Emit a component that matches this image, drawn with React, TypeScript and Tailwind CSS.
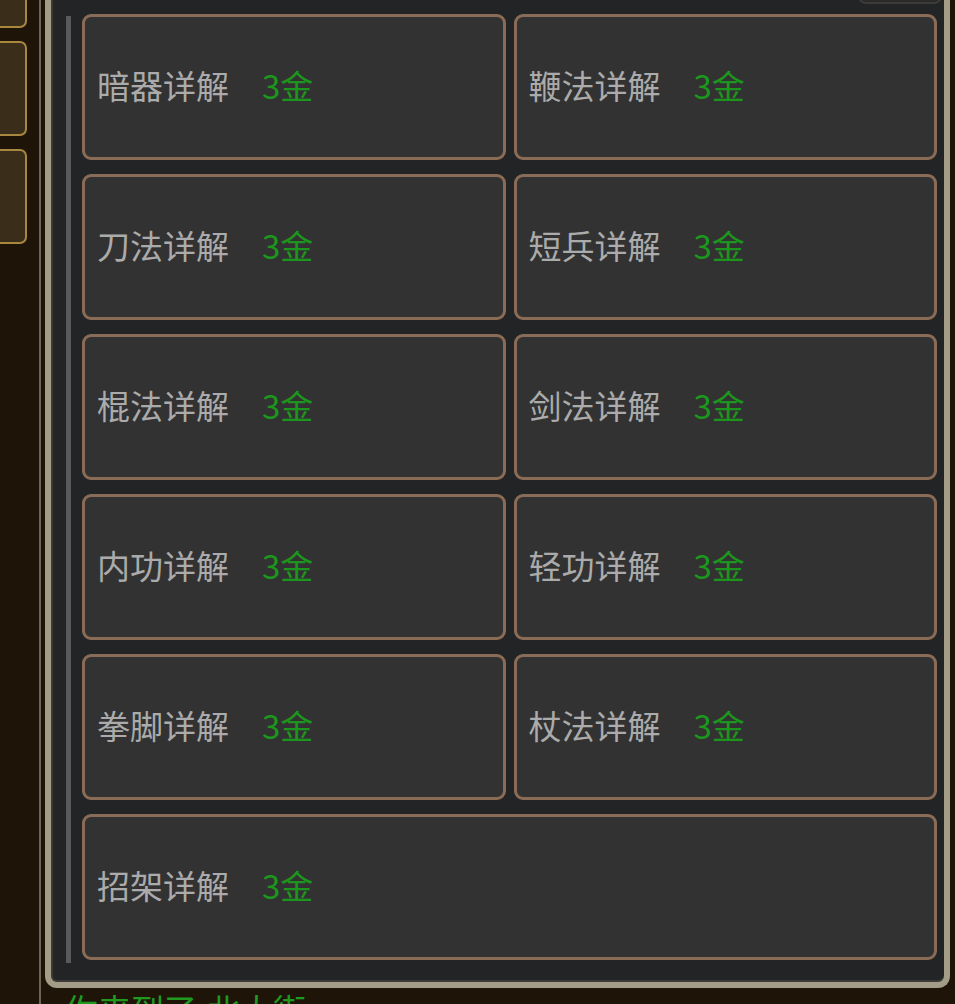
const skills = [
  '暗器详解',
  '鞭法详解',
  '刀法详解',
  '短兵详解',
  '棍法详解',
  '剑法详解',
  '内功详解',
  '轻功详解',
  '拳脚详解',
  '杖法详解',
  '招架详解',
];

const font = { fontFamily: '"Noto Sans CJK SC", "Noto Sans", sans-serif' };

function SkillCard({ name, wide }: { name: string; wide?: boolean }) {
  return (
    <div
      className={`h-[146px] rounded-[9px] border-[3px] border-[#8a6c56] bg-[#323232] flex items-center pl-[12px] pb-[3px] ${
        wide ? 'col-span-2' : ''
      }`}
    >
      <span className="text-[33px] leading-none text-[#ababab]">{name}</span>
      <span className="ml-[33px] text-[33px] leading-none text-[#1c961c]">3金</span>
    </div>
  );
}

export default function App() {
  return (
    <div className="w-[955px] h-[1004px] overflow-hidden bg-[#1e1408] flex" style={font}>
      {/* side buttons */}
      <div className="w-[27px] shrink-0 flex flex-col gap-[13px] mt-[-67px]">
        <div className="h-[95px] rounded-r-[7px] border-[2.5px] border-l-0 border-[#a8873f] bg-[#3a2e1b]" />
        <div className="h-[95px] rounded-r-[7px] border-[2.5px] border-l-0 border-[#a8873f] bg-[#3a2e1b]" />
        <div className="h-[95px] rounded-r-[7px] border-[2.5px] border-l-0 border-[#a8873f] bg-[#3a2e1b]" />
      </div>

      <div className="w-[12px] shrink-0" />
      <div className="w-[2px] shrink-0 bg-[#6d6658]" />
      <div className="w-[4px] shrink-0" />

      {/* main column */}
      <div className="w-[905px] shrink-0 flex flex-col">
        <div className="h-[988px] shrink-0 border-x-[6px] border-b-[6px] border-[#a39d88] rounded-b-[12px] bg-[#232426] flex flex-col overflow-hidden shadow-[inset_0_-2px_0_#3b3a36,inset_2px_0_0_#3b3a36]">
          <div className="h-[4px] flex justify-end pr-[2px]">
            <div className="w-[84px] h-[44px] mt-[-40px] rounded-[8px] border-[2px] border-[#3d3b39] bg-[#2a2a2a]" />
          </div>
          <div className="flex items-start pl-[15px] pr-[7px] pt-[10px]">
            <div className="w-[5px] h-[947px] mt-[2px] bg-[#5a5a5a] shrink-0" />
            <div className="ml-[11px] flex-1 grid grid-cols-2 content-start gap-x-[8px] gap-y-[14px]">
              {skills.map((s, i) => (
                <SkillCard key={s} name={s} wide={i === skills.length - 1} />
              ))}
            </div>
          </div>
        </div>
        <div className="pl-[20px] pt-[5px] text-[33px] leading-none text-[#1f9a1f] whitespace-nowrap">
          你来到了<span className="ml-[10px]">北大街</span>
        </div>
      </div>
    </div>
  );
}
